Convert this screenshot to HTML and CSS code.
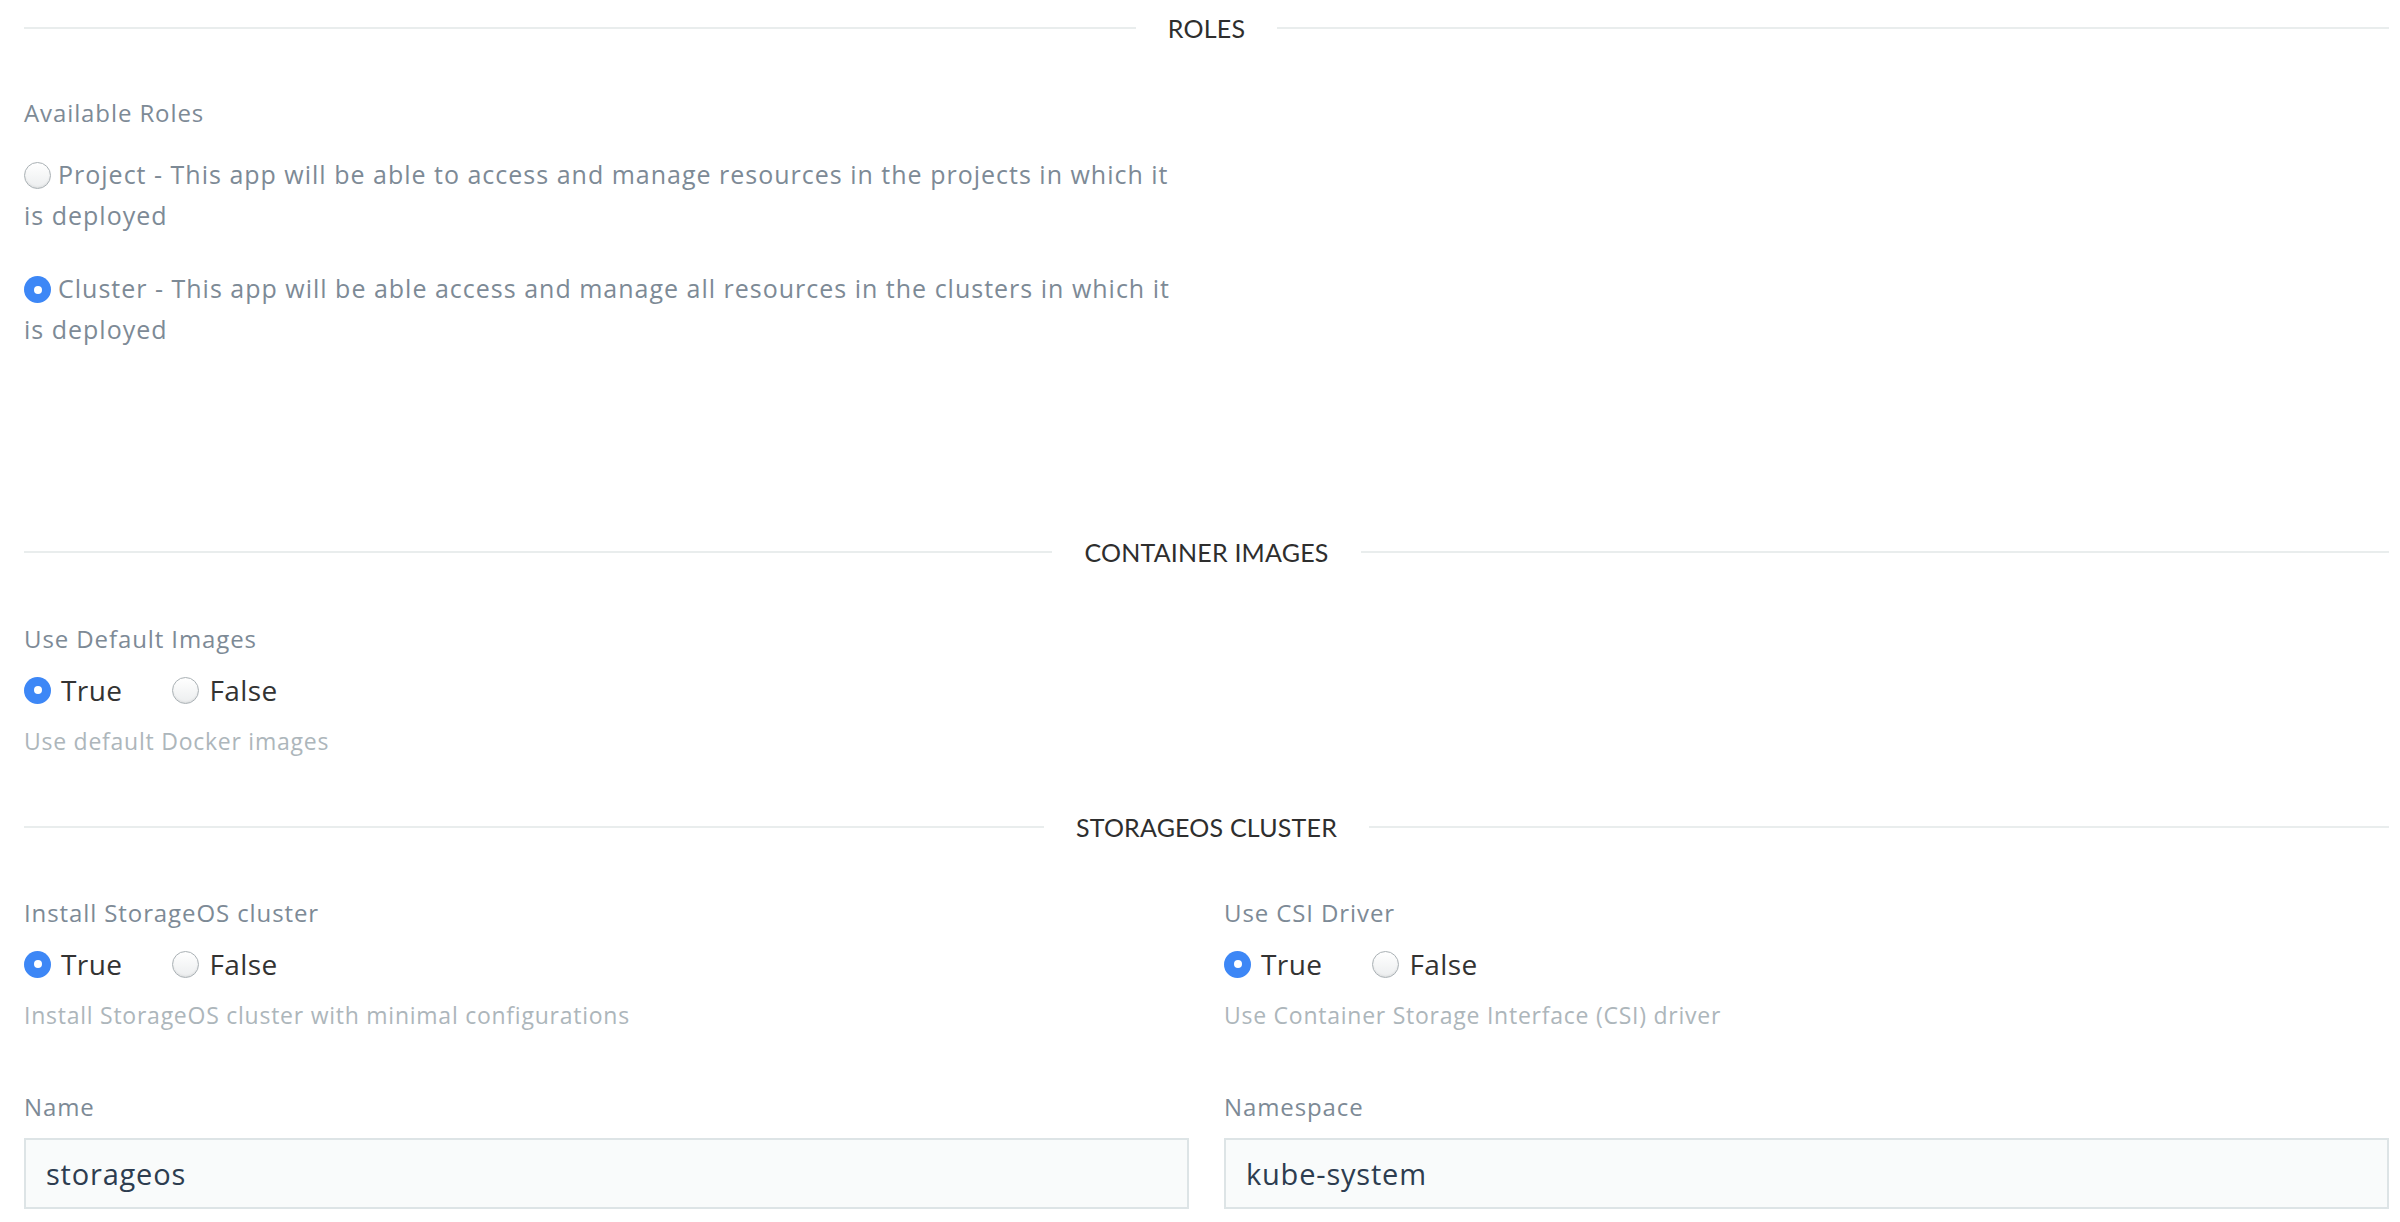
FILE: index.html
```html
<!DOCTYPE html>
<html lang="en">
<head>
<meta charset="utf-8">
<title>Catalog app configuration</title>
<link rel="stylesheet" href="styles.css">
</head>
<body>
<div class="page">
  <div class="sec-head sec-roles"><span class="line"></span><h2>ROLES</h2><span class="line"></span></div>
  <div class="col">
    <div class="label lbl-roles">Available Roles</div>
    <label class="role role-first"><span class="radio"></span>Project - This app will be able to access and manage resources in the projects in which it is deployed</label>
    <label class="role role-second"><span class="radio on"></span>Cluster - This app will be able access and manage all resources in the clusters in which it is deployed</label>
  </div>

  <div class="sec-head sec-images"><span class="line"></span><h2>CONTAINER IMAGES</h2><span class="line"></span></div>
  <div class="col">
    <div class="label">Use Default Images</div>
    <div class="radios">
      <label class="opt"><span class="radio on"></span>True</label>
      <label class="opt"><span class="radio"></span>False</label>
    </div>
    <div class="help">Use default Docker images</div>
  </div>

  <div class="sec-head sec-cluster"><span class="line"></span><h2>STORAGEOS CLUSTER</h2><span class="line"></span></div>
  <div class="grid">
    <div class="field">
      <div class="label">Install StorageOS cluster</div>
      <div class="radios">
        <label class="opt"><span class="radio on"></span>True</label>
        <label class="opt"><span class="radio"></span>False</label>
      </div>
      <div class="help">Install StorageOS cluster with minimal configurations</div>
    </div>
    <div class="field">
      <div class="label">Use CSI Driver</div>
      <div class="radios">
        <label class="opt"><span class="radio on"></span>True</label>
        <label class="opt"><span class="radio"></span>False</label>
      </div>
      <div class="help">Use Container Storage Interface (CSI) driver</div>
    </div>
    <div class="field field-input">
      <div class="label">Name</div>
      <div class="input">storageos</div>
    </div>
    <div class="field field-input">
      <div class="label">Namespace</div>
      <div class="input">kube-system</div>
    </div>
  </div>
</div>
</body>
</html>
```

FILE: styles.css
```css
html, body {
  margin: 0;
  padding: 0;
  background: #ffffff;
}
body {
  font-family: "Open Sans", "Liberation Sans", sans-serif;
  color: #7d8a96;
}
.page {
  padding: 0 11px 0 24px;
}
.sec-head {
  display: flex;
  align-items: center;
  height: 55px;
}
.sec-head .line {
  flex: 1;
  height: 2px;
  background: #e9eded;
}
.sec-head h2 {
  margin: 0;
  padding: 0 32px;
  font-family: "Lato", "Liberation Sans", sans-serif;
  font-weight: 400;
  font-size: 25px;
  color: #2e2e2e;
  letter-spacing: 0.2px;
}
.sec-images { margin-top: 174px; }
.sec-cluster { margin-top: 42px; }

.col {
  width: 1165px;
}
.label {
  font-size: 24px;
  line-height: 41px;
  margin-top: 37px;
  color: #7d8a96;
  letter-spacing: 0.9px;
}
.sec-images + .col .label { margin-top: 38.5px; }
.role {
  display: block;
  font-size: 25px;
  line-height: 41px;
  color: #7d8a96;
  letter-spacing: 1px;
  padding-right: 4px;
}
.role-first { margin-top: 21px; }
.role-second { margin-top: 32px; }
.role .radio {
  vertical-align: -5px;
  margin-right: 7px;
}
.radio {
  display: inline-block;
  box-sizing: border-box;
  width: 27px;
  height: 27px;
  border-radius: 50%;
  border: 1.5px solid #aab1b5;
  background: linear-gradient(#ffffff, #eceeef);
  box-shadow: inset 0 -1px 2px rgba(0,0,0,0.08);
  position: relative;
}
.radio.on {
  border: none;
  background: #3d87f6;
  box-shadow: none;
}
.radio.on::after {
  content: "";
  position: absolute;
  left: 50%;
  top: 50%;
  width: 8px;
  height: 8px;
  margin: -4px 0 0 -4px;
  border-radius: 50%;
  background: #ffffff;
}
.radios {
  display: flex;
  gap: 50px;
  margin-top: 11px;
  height: 41px;
  align-items: center;
}
.opt {
  display: flex;
  align-items: center;
  gap: 10px;
  font-size: 28px;
  color: #333333;
  letter-spacing: 0.4px;
}
.help {
  margin-top: 13px;
  font-size: 23px;
  line-height: 34px;
  color: #adb6bb;
  letter-spacing: 0.75px;
}
.grid {
  display: grid;
  grid-template-columns: 1fr 1fr;
  column-gap: 35px;
}
.field .label { margin-top: 37px; }
.field-input .label { margin-top: 54px; }
.input {
  margin-top: 11.5px;
  box-sizing: border-box;
  height: 71px;
  border: 2px solid #dde4e6;
  background: #f9fbfb;
  padding: 0 20px;
  display: flex;
  align-items: center;
  font-size: 29px;
  color: #2d3d50;
  letter-spacing: 0.8px;
}
```
